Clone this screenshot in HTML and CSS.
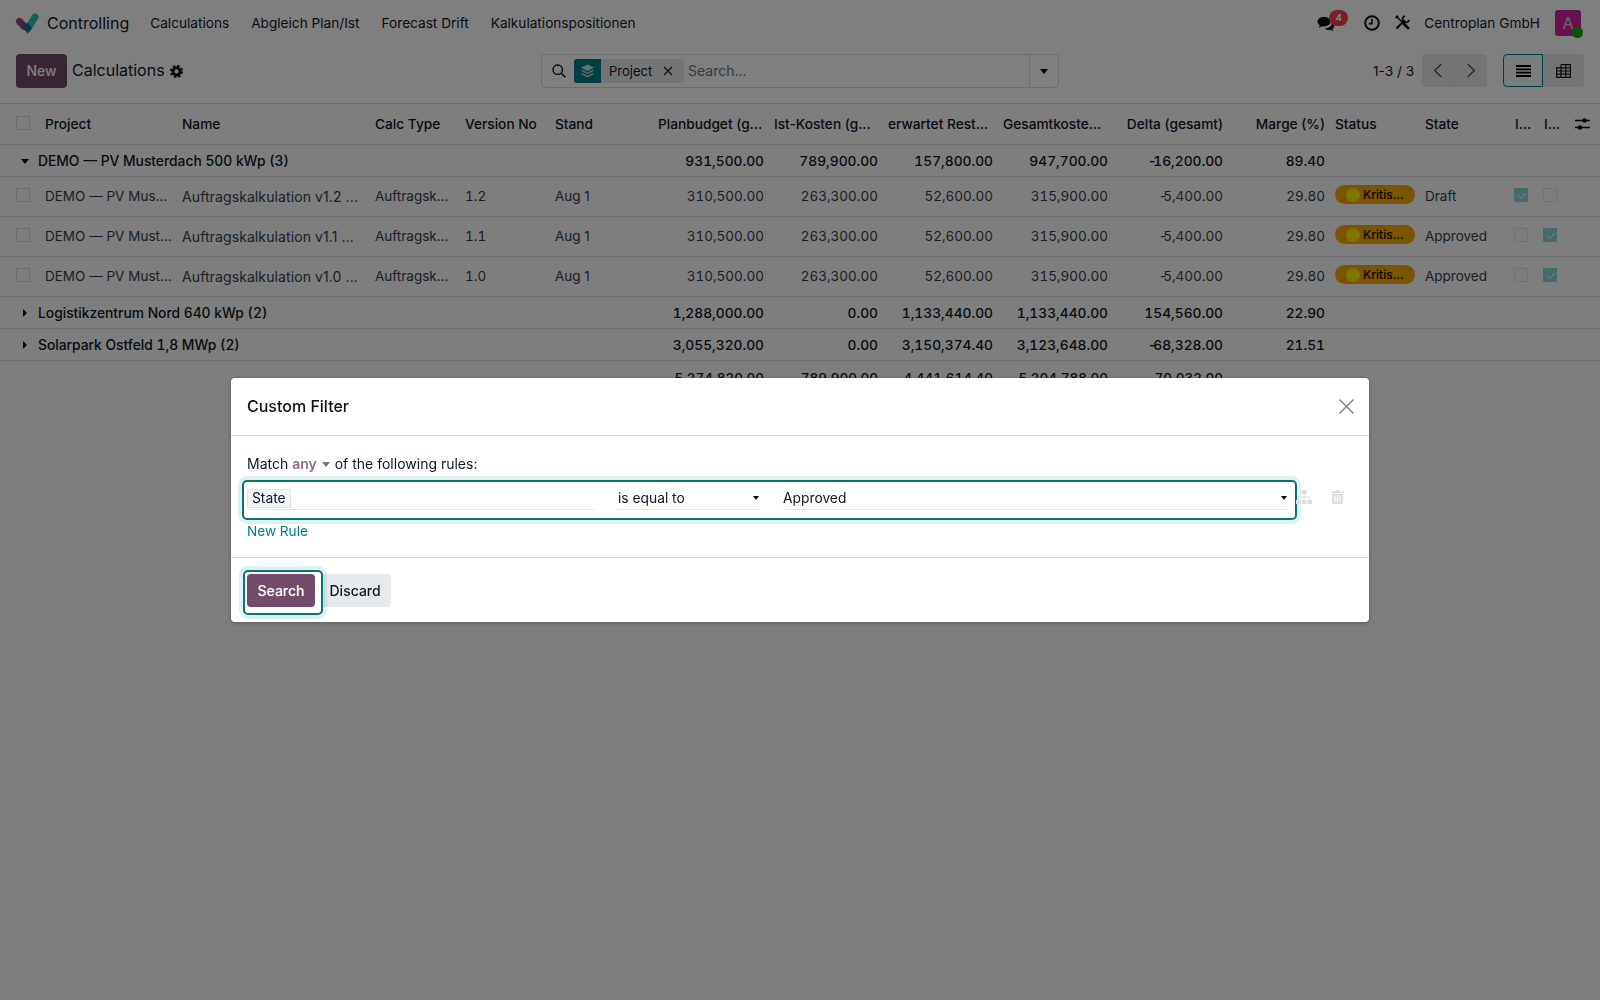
FILE: index.html
```html
<!DOCTYPE html>
<html lang="en">
<head>
  <meta charset="UTF-8">
  <title>Calculations</title>
  <link rel="stylesheet" href="styles.css">
</head>
<body>

  <header class="navbar">
    <svg class="logo" viewBox="0 0 24 22">
      <path d="M4.500 9.500 L9.500 14.500" stroke="#8a4a8c" stroke-width="7" stroke-linecap="round"/>
      <path d="M13 16.500 L20 5" stroke="#1fc4aa" stroke-width="7" stroke-linecap="round"/>
      <path d="M8 15 L12.500 10.500 L17 16 L13 21 Q12.500 21.500 12 21 Z" fill="#0f7484"/>
    </svg>
    <span class="app_name">Controlling</span>
    <nav class="menu">
      <a href="#">Calculations</a>
      <a href="#">Abgleich Plan/Ist</a>
      <a href="#">Forecast Drift</a>
      <a href="#">Kalkulationspositionen</a>
    </nav>
    <div class="systray">
      <span class="messages">
        <svg class="icon_msg" viewBox="0 0 18 16">
          <path d="M7 1C3.200 1 .5 3 .5 5.600c0 1.500.9 2.800 2.300 3.700-.2.900-.7 1.600-1.300 2.200 1.300-.1 2.500-.6 3.300-1.300.7.2 1.400.3 2.200.3 3.800 0 6.500-2.200 6.500-4.900S10.800 1 7 1z" fill="#111"/>
          <path d="M15 6.500c.1 3.300-3 5.700-7 6 1 1 2.500 1.500 4 1.500.5 0 1-.1 1.500-.2.700.6 1.800 1 3 1.100-.6-.5-1-1.200-1.100-1.900 1.100-.7 1.800-1.800 1.800-3 0-1.400-.9-2.700-2.200-3.500z" fill="#111"/>
        </svg>
        <span class="badge_count">4</span>
      </span>
      <svg class="icon_clock" viewBox="0 0 16 16">
        <circle cx="8" cy="8" r="6.800" fill="none" stroke="#111" stroke-width="2"/>
        <path d="M8 4v4.600H4.800" fill="none" stroke="#111" stroke-width="1.600"/>
      </svg>
      <svg class="icon_tools" viewBox="0 0 16 16">
        <path d="M1.500 14.500 L10.500 5.500" stroke="#111" stroke-width="2.200"/>
        <path d="M10.800 1.200 A3.400 3.400 0 1 0 14.800 5.200" fill="none" stroke="#111" stroke-width="1.800"/>
        <path d="M2.500 2.500 L13 13" stroke="#111" stroke-width="1.500"/>
        <path d="M9.800 9.800 L14 14" stroke="#111" stroke-width="3" stroke-linecap="round"/>
        <path d="M.8 3.200 L3.200 .8" stroke="#111" stroke-width="2.200"/>
      </svg>
      <span class="company">Centroplan GmbH</span>
      <span class="avatar">A<i class="avatar_dot"></i></span>
    </div>
  </header>

  <section class="control_panel">
    <div class="cp_left">
      <a href="#" class="btn btn_new">New</a>
      <span class="cp_title">Calculations</span>
      <svg class="icon_gear" viewBox="0 0 14 14">
        <circle cx="7" cy="7" r="3.800" fill="none" stroke="#111" stroke-width="3"/>
        <circle cx="7" cy="7" r="6" fill="none" stroke="#111" stroke-width="2" stroke-dasharray="2.700 2"/>
      </svg>
    </div>
    <div class="searchbar">
      <svg class="icon_search" viewBox="0 0 14 14">
        <circle cx="5.700" cy="5.700" r="4.700" fill="none" stroke="#111" stroke-width="1.400"/>
        <path d="M9.200 9.200 L13.300 13.300" stroke="#111" stroke-width="1.600"/>
      </svg>
      <span class="facet">
        <span class="facet_icon">
          <svg viewBox="0 0 14 14">
            <path d="M7 0 L14 3.500 L7 7 L0 3.500 Z" fill="#cfe3e3"/>
            <path d="M1.500 6 L7 8.800 L12.500 6 L14 6.800 L7 10.300 L0 6.800 Z" fill="#cfe3e3"/>
            <path d="M1.500 9.400 L7 12.200 L12.500 9.400 L14 10.200 L7 13.700 L0 10.200 Z" fill="#cfe3e3"/>
          </svg>
        </span>
        <span class="facet_label">Project</span>
        <svg class="facet_x" viewBox="0 0 10 10"><path d="M1 1 L9 9 M9 1 L1 9" stroke="#333" stroke-width="1.500"/></svg>
      </span>
      <span class="search_input">Search...</span>
      <span class="search_toggle"><i class="caret"></i></span>
    </div>
    <div class="cp_right">
      <span class="pager_text">1-3 / 3</span>
      <div class="btn_group">
        <a href="#" class="btn_pager"><svg viewBox="0 0 10 16"><path d="M8.500 1 L1.500 8 L8.500 15" fill="none" stroke="#555" stroke-width="1.500"/></svg></a>
        <a href="#" class="btn_pager"><svg viewBox="0 0 10 16"><path d="M1.500 1 L8.500 8 L1.500 15" fill="none" stroke="#555" stroke-width="1.500"/></svg></a>
      </div>
      <div class="view_switch">
        <a href="#" class="view_btn active">
          <svg viewBox="0 0 15 12"><path d="M0 1h15M0 4.300h15M0 7.700h15M0 11h15" stroke="#000" stroke-width="1.800"/></svg>
        </a>
        <a href="#" class="view_btn">
          <svg viewBox="0 0 15 14"><path d="M5 .6H14.400V13.400H.6V3.800H14.400M.6 7H14.400M.6 10.200H14.400M5 .6V13.400M9.700 .6V13.400" fill="none" stroke="#111" stroke-width="1.200"/></svg>
        </a>
      </div>
    </div>
  </section>

  <table class="list">
    <colgroup>
      <col class="c_check"><col class="c_project"><col class="c_name"><col class="c_mid"><col class="c_mid"><col class="c_stand">
      <col class="c_num"><col class="c_num2"><col class="c_num3"><col class="c_num3"><col class="c_num3"><col class="c_marge">
      <col class="c_mid"><col class="c_mid"><col class="c_bool"><col class="c_bool"><col class="c_opt">
    </colgroup>
    <thead>
      <tr>
        <th><i class="cb"></i></th>
        <th>Project</th>
        <th>Name</th>
        <th>Calc Type</th>
        <th>Version No</th>
        <th>Stand</th>
        <th>Planbudget (g...</th>
        <th>Ist-Kosten (g...</th>
        <th>erwartet Rest...</th>
        <th>Gesamtkoste...</th>
        <th class="num">Delta (gesamt)</th>
        <th class="num">Marge (%)</th>
        <th>Status</th>
        <th>State</th>
        <th>I...</th>
        <th>I...</th>
        <th>
          <svg class="icon_sliders" viewBox="0 0 15 14">
            <path d="M0 3.500h15M0 10.500h15" stroke="#111" stroke-width="1.400"/>
            <circle cx="9.500" cy="3.500" r="2.300" fill="#111"/>
            <circle cx="5" cy="10.500" r="2.300" fill="#111"/>
          </svg>
        </th>
      </tr>
    </thead>
    <tbody>
      <tr class="group">
        <td colspan="6" class="group_label"><i class="caret group_caret"></i>DEMO — PV Musterdach 500 kWp (3)</td>
        <td class="num">931,500.00</td><td class="num">789,900.00</td><td class="num">157,800.00</td>
        <td class="num">947,700.00</td><td class="num"><span class="minus">-</span>16,200.00</td><td class="num">89.40</td>
        <td colspan="5"></td>
      </tr>
      <tr class="row">
        <td><i class="cb"></i></td>
        <td>DEMO — PV Mus...</td><td class="name">Auftragskalkulation v1.2 ...</td><td>Auftragsk...</td><td class="ver">1.2</td><td>Aug 1</td>
        <td class="num">310,500.00</td><td class="num">263,300.00</td><td class="num">52,600.00</td>
        <td class="num">315,900.00</td><td class="num"><span class="minus">-</span>5,400.00</td><td class="num">29.80</td>
        <td><span class="status"><i class="bullet"></i>Kritis...</span></td><td>Draft</td>
        <td><i class="cb on"></i></td><td><i class="cb off"></i></td><td></td>
      </tr>
      <tr class="row">
        <td><i class="cb"></i></td>
        <td>DEMO — PV Must...</td><td class="name">Auftragskalkulation v1.1 ...</td><td>Auftragsk...</td><td class="ver">1.1</td><td>Aug 1</td>
        <td class="num">310,500.00</td><td class="num">263,300.00</td><td class="num">52,600.00</td>
        <td class="num">315,900.00</td><td class="num"><span class="minus">-</span>5,400.00</td><td class="num">29.80</td>
        <td><span class="status"><i class="bullet"></i>Kritis...</span></td><td>Approved</td>
        <td><i class="cb off"></i></td><td><i class="cb on"></i></td><td></td>
      </tr>
      <tr class="row">
        <td><i class="cb"></i></td>
        <td>DEMO — PV Must...</td><td class="name">Auftragskalkulation v1.0 ...</td><td>Auftragsk...</td><td class="ver">1.0</td><td>Aug 1</td>
        <td class="num">310,500.00</td><td class="num">263,300.00</td><td class="num">52,600.00</td>
        <td class="num">315,900.00</td><td class="num"><span class="minus">-</span>5,400.00</td><td class="num">29.80</td>
        <td><span class="status"><i class="bullet"></i>Kritis...</span></td><td>Approved</td>
        <td><i class="cb off"></i></td><td><i class="cb on"></i></td><td></td>
      </tr>
      <tr class="group">
        <td colspan="6" class="group_label"><i class="caret_right"></i>Logistikzentrum Nord 640 kWp (2)</td>
        <td class="num">1,288,000.00</td><td class="num">0.00</td><td class="num">1,133,440.00</td>
        <td class="num">1,133,440.00</td><td class="num">154,560.00</td><td class="num">22.90</td>
        <td colspan="5"></td>
      </tr>
      <tr class="group">
        <td colspan="6" class="group_label"><i class="caret_right"></i>Solarpark Ostfeld 1,8 MWp (2)</td>
        <td class="num">3,055,320.00</td><td class="num">0.00</td><td class="num">3,150,374.40</td>
        <td class="num">3,123,648.00</td><td class="num"><span class="minus">-</span>68,328.00</td><td class="num">21.51</td>
        <td colspan="5"></td>
      </tr>
    </tbody>
    <tfoot>
      <tr>
        <td colspan="6"></td>
        <td class="num">5,274,820.00</td><td class="num">789,900.00</td><td class="num">4,441,614.40</td>
        <td class="num">5,204,788.00</td><td class="num">70,032.00</td><td colspan="6"></td>
      </tr>
    </tfoot>
  </table>

  <!-- dialog sits over the whole page -->
  <div class="backdrop"></div>
  <div class="modal_wrap">
    <div class="modal">
      <div class="modal_header">
        <h4>Custom Filter</h4>
        <svg class="modal_close" viewBox="0 0 14 14"><path d="M.5 .5 L13.500 13.500 M13.500 .5 L.5 13.500" stroke="#808080" stroke-width="1.300"/></svg>
      </div>
      <div class="modal_body">
        <p class="match">Match <span class="match_any">any</span><i class="caret match_caret"></i> of the following rules:</p>
        <div class="rule_line">
          <div class="rule">
            <div class="field f_path"><span class="path_tag">State</span></div>
            <div class="field f_op">is equal to<i class="caret"></i></div>
            <div class="field f_val">Approved<i class="caret"></i></div>
          </div>
          <svg class="icon_sitemap" viewBox="0 0 16 14">
            <path d="M5.500 0h5v4h-5zM0 10h4.500v4H0zM5.750 10h4.500v4h-4.500zM11.500 10H16v4h-4.500z" fill="#dcdcdc"/>
            <path d="M8 4v6M2.250 10V7h11.500v3" fill="none" stroke="#dcdcdc" stroke-width="1"/>
          </svg>
          <svg class="icon_trash" viewBox="0 0 13 14">
            <path d="M4 1.500 L5 0h3l1 1.500h4V3H0V1.500zM1 4h11v8.500A1.500 1.500 0 0 1 10.500 14h-8A1.500 1.500 0 0 1 1 12.500z" fill="#dcdcdc"/>
            <path d="M4 5.500v7M6.500 5.500v7M9 5.500v7" stroke="#fff" stroke-width="1"/>
          </svg>
        </div>
        <a href="#" class="new_rule">New Rule</a>
      </div>
      <div class="modal_footer">
        <a href="#" class="btn btn_search">Search</a>
        <a href="#" class="btn btn_discard">Discard</a>
      </div>
    </div>
  </div>

</body>
</html>
```

FILE: styles.css
```css
* {
  box-sizing: border-box;
}

html, body {
  height: 100%;
}

body {
  margin: 0;
  background: #fafdfb;
  color: #111827;
  font-family: Inter, "Noto Sans", sans-serif;
  font-size: 14px;
  overflow: hidden;
}

a {
  color: inherit;
  text-decoration: none;
}

.caret {
  display: inline-block;
  border-top: 5px solid #111;
  border-left: 4.5px solid transparent;
  border-right: 4.5px solid transparent;
}

/* top bar */
.navbar {
  height: 46px;
  display: flex;
  align-items: center;
  padding: 0 0 1px 15px;
  background: #fff;
}

.logo {
  width: 24px;
  height: 22px;
}

.app_name {
  font-size: 16px;
  margin-left: 8px;
}

.menu {
  display: flex;
  gap: 22px;
  margin-left: 21px;
  font-size: 13.650px;
}

.systray {
  margin-left: auto;
  display: flex;
  align-items: center;
  padding-right: 19px;
}

.messages {
  position: relative;
  width: 31px;
  height: 22px;
  display: block;
}

.icon_msg {
  width: 18px;
  height: 16px;
  position: absolute;
  left: 0;
  top: 4px;
}

.badge_count {
  position: absolute;
  left: 12px;
  top: -2px;
  width: 19px;
  height: 16px;
  border-radius: 8px;
  background: #f04050;
  color: #fff;
  font-size: 9.500px;
  font-weight: 700;
  text-align: center;
  line-height: 16px;
}

.icon_clock {
  width: 16px;
  height: 16px;
  margin-left: 16px;
}

.icon_tools {
  width: 15px;
  height: 15px;
  margin-left: 15px;
}

.company {
  margin-left: 14px;
  font-size: 13.700px;
}

.avatar {
  position: relative;
  width: 26px;
  height: 26px;
  margin-left: 15px;
  border-radius: 3px;
  background: #c8279f;
  color: #e8c8e0;
  text-align: center;
  line-height: 26px;
  font-size: 16px;
}

.avatar_dot {
  position: absolute;
  right: -2px;
  bottom: -2px;
  width: 11px;
  height: 11px;
  border-radius: 50%;
  background: #0ea60e;
}

/* control panel */
.control_panel {
  height: 58px;
  border-bottom: 1px solid #d8dadd;
  background: #fff;
  display: grid;
  grid-template-columns: 541px 518px 1fr;
  padding-top: 8px;
  align-items: start;
}

.cp_left {
  display: flex;
  align-items: center;
  padding-left: 16px;
  height: 34px;
}

.btn {
  display: inline-block;
  border-radius: 4px;
  font-weight: 500;
  height: 33px;
  line-height: 33px;
  padding: 0 10.500px;
}

.btn_new {
  background: #714b67;
  color: #fff;
  width: 51px;
  height: 34px;
  line-height: 34px;
  text-align: center;
  padding: 0;
}

.cp_title {
  font-size: 16px;
  margin: 0 0 3px 5px;
}

.icon_gear {
  width: 13px;
  height: 13px;
  margin-left: 5px;
}

.searchbar {
  height: 34px;
  border: 1px solid #d8dadd;
  border-radius: 4px;
  display: flex;
  align-items: center;
  padding-left: 10px;
  position: relative;
}

.icon_search {
  width: 14px;
  height: 14px;
}

.facet {
  display: flex;
  align-items: center;
  height: 24px;
  width: 110px;
  margin-left: 8px;
  background: #e7e9ed;
  border-radius: 3px;
  font-size: 13px;
}

.facet_icon {
  width: 27px;
  height: 24px;
  background: #017e84;
  border-radius: 3px 0 0 3px;
  display: flex;
  align-items: center;
  justify-content: center;
}

.facet_icon svg {
  width: 13px;
  height: 14px;
}

.facet_label {
  margin: 0 0 1px 8px;
}

.facet_x {
  width: 10px;
  height: 10px;
  margin-left: 11px;
}

.search_input {
  margin: 0 0 1px 4px;
  color: #6b7280;
}

.search_toggle {
  margin-left: auto;
  width: 29px;
  height: 32px;
  border-left: 1px solid #d8dadd;
  display: flex;
  align-items: center;
  justify-content: center;
}

.cp_right {
  display: flex;
  align-items: flex-start;
  padding-left: 314px;
}

.pager_text {
  line-height: 34px;
  width: 49px;
  font-size: 13.700px;
}

.btn_group {
  display: flex;
}

.btn_pager {
  width: 32.500px;
  height: 33px;
  background: #e7e9ed;
  display: flex;
  align-items: center;
  justify-content: center;
}

.btn_pager:first-child {
  border-radius: 4px 0 0 4px;
  border-right: 1px solid #dfe1e5;
}

.btn_pager:last-child {
  border-radius: 0 4px 4px 0;
}

.btn_pager svg {
  width: 10px;
  height: 15px;
}

.view_switch {
  display: flex;
  margin-left: 16px;
}

.view_btn {
  width: 41px;
  height: 33px;
  background: #e7e9ed;
  display: flex;
  align-items: center;
  justify-content: center;
  border-radius: 0 4px 4px 0;
}

.view_btn.active {
  width: 40px;
  background: #f5fafa;
  border: 1px solid #017e84;
  border-radius: 4px 0 0 4px;
}

.view_btn svg {
  width: 15px;
  height: 14px;
}

/* list */
.list {
  width: 1600px;
  table-layout: fixed;
  border-collapse: collapse;
  font-size: 13.500px;
}

.c_check { width: 40px; }
.c_project { width: 137px; }
.c_name { width: 193px; }
.c_mid { width: 90px; }
.c_stand { width: 103px; }
.c_num { width: 116px; }
.c_num2 { width: 114px; }
.c_num3 { width: 115px; }
.c_marge { width: 102px; }
.c_bool { width: 29px; }
.c_opt { width: 32px; }

.list th, .list td {
  padding: 0 5px;
  white-space: nowrap;
  overflow: hidden;
  text-align: left;
}

.list th {
  height: 40px;
  font-size: 13.700px;
  font-weight: 500;
  border-bottom: 1px solid #d8dadd;
}

.list .num {
  text-align: right;
}

.list td.num, .list td.ver, .list td.group_label {
  font-variant-numeric: tabular-nums;
}

.minus {
  font-variant-numeric: normal;
  margin-right: -2px;
}

.row .minus {
  margin-right: -3px;
}

.list .group td {
  height: 32px;
  padding-top: 1px;
  font-weight: 500;
  border-bottom: 1px solid #d8dadd;
}

.group td.num {
  font-size: 13.750px;
}

.list td.group_label {
  padding-left: 21px;
  font-size: 13.800px;
}

.row td {
  height: 40px;
  color: #374151;
  border-bottom: 1px solid #d8dadd;
}

.row td.name {
  font-size: 14px;
  letter-spacing: .1px;
}

tfoot td {
  height: 36px;
  font-weight: 500;
}

.cb {
  display: block;
  width: 14px;
  height: 14px;
  margin: -2px 0 0 11px;
  border: 1px solid #d8dadd;
  border-radius: 1px;
  position: relative;
}

.cb.on {
  margin-left: -1px;
  background: #8cd4d8;
  border-color: #8cd4d8;
}

.cb.on::after {
  content: "";
  position: absolute;
  left: 3px;
  top: 3px;
  width: 7px;
  height: 4px;
  border-left: 1.500px solid #e9f3f3;
  border-bottom: 1.500px solid #e9f3f3;
  transform: rotate(-45deg);
}

.cb.off {
  margin-left: -1px;
  opacity: .7;
}

.status {
  display: flex;
  align-items: center;
  width: 80px;
  height: 19px;
  margin-top: -3px;
  border-radius: 10px;
  background: #f4a800;
  font-size: 12px;
  font-weight: 500;
  color: #111;
  padding-left: 11px;
}

.bullet {
  width: 14px;
  height: 14px;
  border-radius: 50%;
  background: #ffec00;
  margin-right: 3px;
}

.group_caret {
  margin-right: 9px;
  vertical-align: 2px;
}

.caret_right {
  display: inline-block;
  border-left: 4.500px solid #111;
  border-top: 4.500px solid transparent;
  border-bottom: 4.500px solid transparent;
  margin-left: 2px;
  margin-right: 11px;
  vertical-align: 1px;
}

.icon_sliders {
  width: 15px;
  height: 14px;
  display: block;
  margin-left: 2px;
}

/* dialog */
.backdrop {
  position: fixed;
  inset: 0;
  background: rgba(0, 0, 0, .5);
}

.modal_wrap {
  position: fixed;
  inset: 0;
  display: flex;
  justify-content: center;
  align-items: flex-start;
  padding-top: 378px;
}

.modal {
  width: 1138px;
  height: 244px;
  background: #fff;
  border-radius: 4px;
  box-shadow: 0 1px 4px rgba(0, 0, 0, .3);
}

.modal_header {
  height: 58px;
  border-bottom: 1px solid #d8dadd;
  display: flex;
  align-items: center;
  justify-content: space-between;
  padding: 0 16px 2px 16px;
}

.modal_header h4 {
  margin: 0;
  font-size: 16px;
  font-weight: 500;
  color: #111;
}

.modal_close {
  width: 15px;
  height: 15px;
  margin: 1px -1px 0 0;
}

.modal_body {
  height: 122px;
  padding: 19px 16px 0 16px;
  border-bottom: 1px solid #d8dadd;
}

.match {
  margin: 0;
  height: 17px;
  line-height: 17px;
}

.match_any {
  color: #8f6f88;
  font-weight: 600;
}

.match_caret {
  border-top-color: #777;
  margin: 0 1px 0 5px;
  vertical-align: 2px;
}

.rule_line {
  display: flex;
  align-items: flex-start;
  margin: 8px 0 0 -5px;
}

.rule {
  width: 1055px;
  height: 40px;
  display: flex;
  border: 2px solid #0a7570;
  border-radius: 5px;
  box-shadow: 0 0 0 4px rgba(1, 126, 132, .12);
  padding: 0 8px 0 3px;
}

.field {
  height: 28px;
  border-bottom: 1px solid #e4e6e9;
  display: flex;
  align-items: center;
  padding-top: 6px;
  font-size: 13.800px;
}

.f_path {
  width: 347px;
}

.path_tag {
  height: 19px;
  width: 44px;
  background: #f0f4f7;
  border: 1px solid #dfe4ea;
  line-height: 17px;
  padding-left: 4px;
}

.f_op {
  width: 141px;
  margin-left: 24px;
  justify-content: space-between;
  padding-top: 5px;
}

.f_val {
  width: 504px;
  margin-left: 24px;
  justify-content: space-between;
  padding-top: 5px;
}

.f_op .caret, .f_val .caret {
  border-top-width: 4px;
  border-left-width: 3.500px;
  border-right-width: 3.500px;
}

.icon_sitemap {
  width: 16px;
  height: 14px;
  margin: 10px 0 0 -1px;
}

.icon_trash {
  width: 13px;
  height: 14px;
  margin: 10px 0 0 19px;
}

.new_rule {
  display: block;
  color: #017e84;
  margin-top: 1px;
  line-height: 20px;
  font-size: 13.600px;
}

.modal_footer {
  padding: 16px;
  display: flex;
  gap: 4px;
}

.btn_search {
  position: relative;
  z-index: 1;
  color: #fff;
}

/* focus ring, wider on the right and bottom than the button */
.btn_search::after {
  content: "";
  position: absolute;
  z-index: -2;
  left: -4px;
  top: -4px;
  right: -8px;
  bottom: -8px;
  background: #fff;
  border: 2px solid #0a7570;
  border-radius: 5px;
  box-shadow: 0 0 0 4px rgba(1, 126, 132, .12);
}

.btn_search::before {
  content: "";
  position: absolute;
  z-index: -1;
  inset: 0;
  background: #714b67;
  border-radius: 4px;
}

.btn_discard {
  background: #e7e9ed;
  color: #111827;
}
```
